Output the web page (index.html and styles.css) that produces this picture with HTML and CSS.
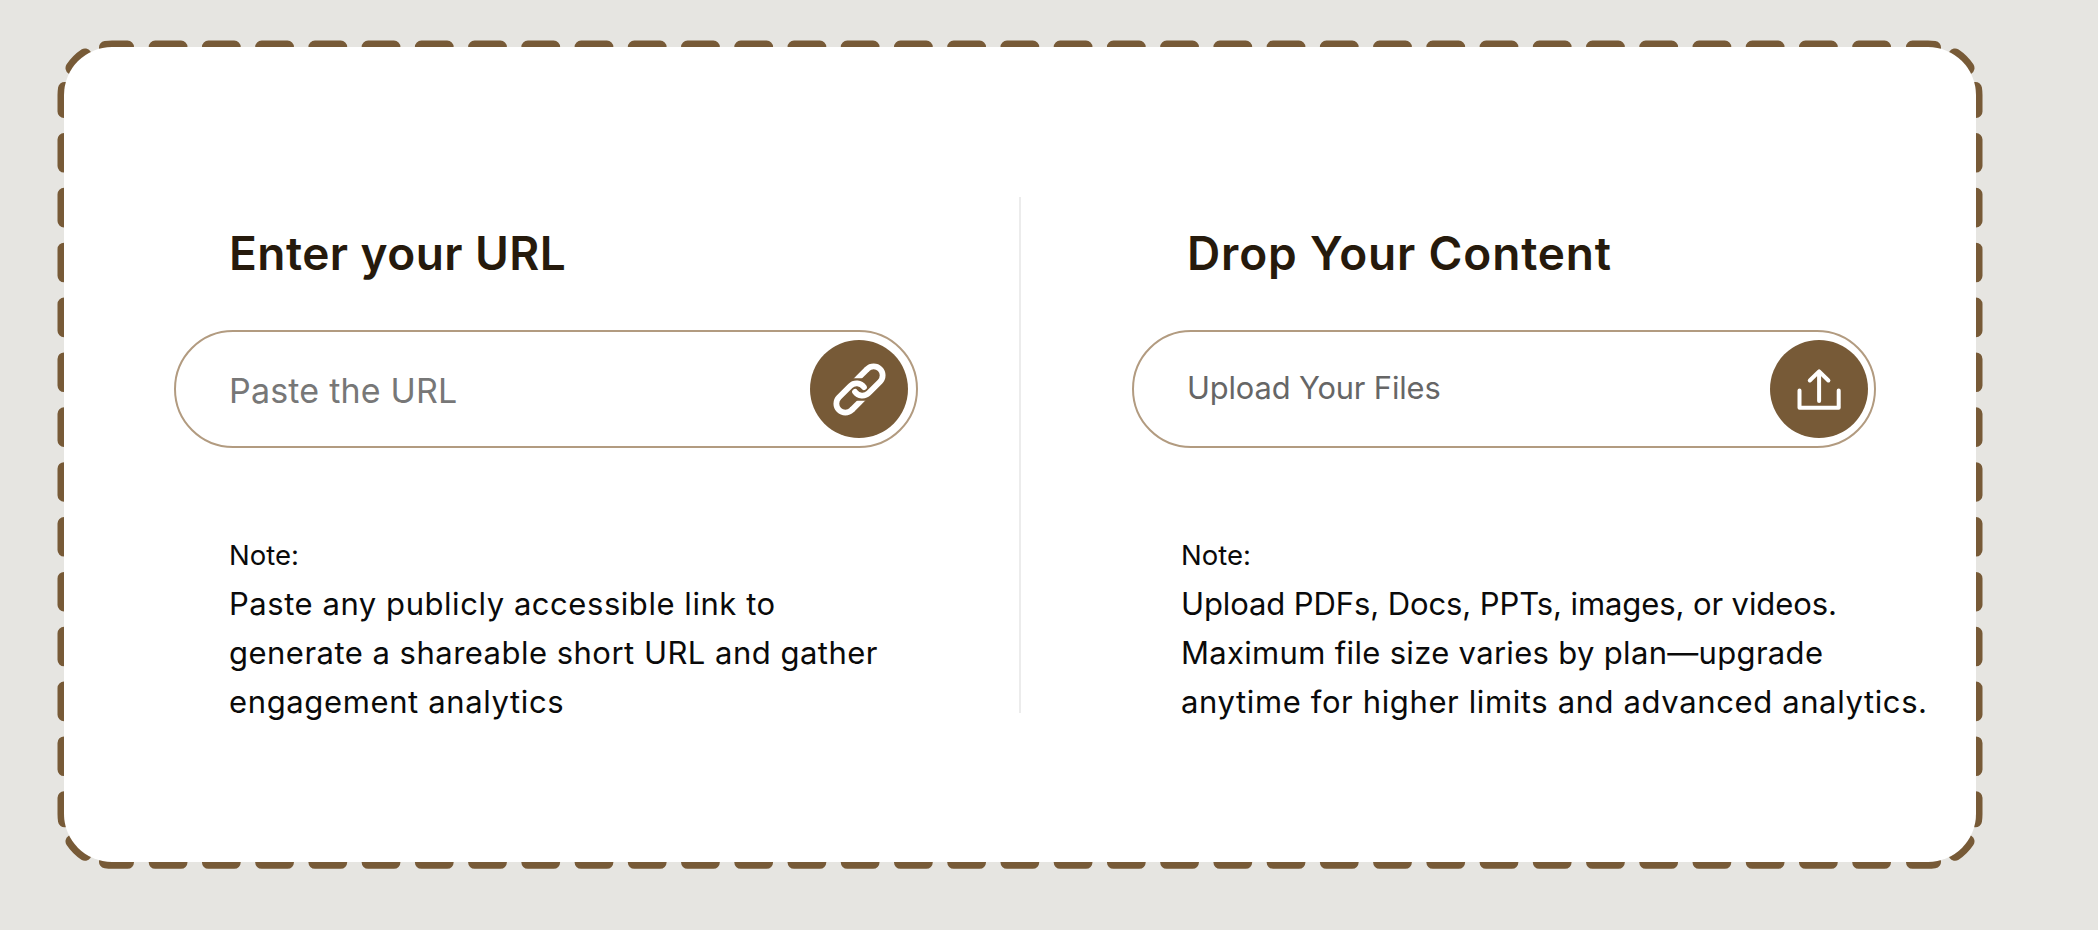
FILE: index.html
```
<!DOCTYPE html>
<html lang="en">
<head>
<meta charset="utf-8">
<title>Share content</title>
<link rel="stylesheet" href="styles.css">
</head>
<body>
<main class="card">
  <svg class="dashes" viewBox="54 37 1932 835" aria-hidden="true">
    <g id="h">
      <path class="dash-h" d="M155.2 47H1884.6"/>
      <path d="M105.5 47.5Q109 47 112 47H127.5M1934.5 47.5Q1931 47 1928 47H1912.5"/>
    </g>
    <use href="#h" transform="matrix(1 0 0 -1 0 909.3)"/>
    <g id="v">
      <path class="dash-v" d="M64 139.5V769.7"/>
      <path d="M64.5 88.5Q64 92 64 95V111.5M64.5 820.8Q64 817 64 814V797.8"/>
      <path d="M72 68A48 48 0 0 1 85 55M72 841.3A48 48 0 0 0 85 854.3"/>
    </g>
    <use href="#v" transform="matrix(-1 0 0 1 2040 0)"/>
  </svg>
  <section class="panel">
    <h2 class="title title-url">Enter your URL</h2>
    <div class="field">
      <span class="hint hint-url">Paste the URL</span>
      <button class="action" aria-label="Shorten link">
        <svg viewBox="0 0 98.5 98.5">
          <defs><clipPath id="cut"><path d="M-20 -30H30V-11.3H-20Z"/></clipPath></defs>
          <g transform="translate(49.5 49.5)" fill="none" stroke="#fff" stroke-width="5.8">
            <g id="half">
              <g clip-path="url(#cut)"><path transform="rotate(-45)" d="M0 -9H20.2"/></g>
              <path transform="rotate(-45)" stroke-linecap="round" d="M20 -9A9 9 0 0 1 20 9H4A9 9 0 0 1 -4.8 -1.5"/>
            </g>
            <use href="#half" transform="rotate(180)"/>
          </g>
        </svg>
      </button>
    </div>
    <div class="note">
      <p class="label">Note:</p>
      <p class="line l1">Paste any publicly accessible link to</p>
      <p class="line l2">generate a shareable short URL and gather</p>
      <p class="line l3">engagement analytics</p>
    </div>
  </section>
  <div class="divider"></div>
  <section class="panel panel-files">
    <h2 class="title title-drop">Drop Your Content</h2>
    <div class="field field-files">
      <span class="hint hint-files">Upload Your Files</span>
      <button class="action" aria-label="Upload files">
        <svg viewBox="0 0 98.5 98.5"><path d="M29.5 50.5V67.7H68.7V50.5M49.1 61V31.5M39.8 40.5L49.1 31.3L58.4 40.5" fill="none" stroke="#fff" stroke-width="4" stroke-linecap="round" stroke-linejoin="round"/></svg>
      </button>
    </div>
    <div class="note">
      <p class="label">Note:</p>
      <p class="line r1">Upload PDFs, Docs, PPTs, images, or videos.</p>
      <p class="line r2">Maximum file size varies by plan—upgrade</p>
      <p class="line r3">anytime for higher limits and advanced analytics.</p>
    </div>
  </section>
</main>
</body>
</html>
```
FILE: styles.css
```
* { box-sizing: border-box; margin: 0; }
body {
  padding: 47px 0 0 64px;
  height: 930px;
  overflow: hidden;
  background: #e6e5e1;
  font-family: Inter, "Open Sans", sans-serif;
}
.card {
  position: relative;
  display: grid;
  grid-template-columns: 845px 2px 847px;
  width: 1912px;
  height: 815.3px;
  padding: 150px 0 0 110px;
}
.card::before {
  content: "";
  position: absolute;
  inset: 0;
  border-radius: 48px;
  background: #fff;
}
.dashes {
  position: absolute;
  z-index: -1;
  left: -10px;
  top: -10px;
  width: 1932px;
  height: 835px;
  fill: none;
  stroke: #775a37;
  stroke-width: 13;
  stroke-linecap: round;
}
.dash-h { stroke-dasharray: 25.8 27.435; }
.dash-v { stroke-dasharray: 26.6 28.26; }
.panel { position: relative; white-space: nowrap; }
.panel-files { padding-left: 111px; }
.divider { position: relative; height: 516px; background: #ececec; }
.title {
  padding: 28px 0 0 55px;
  font-size: 46px;
  line-height: 56px;
  font-weight: 600;
  color: #261a0c;
}
.title-url { letter-spacing: 0.45px; }
.title-drop { letter-spacing: 0.85px; }
.field {
  display: flex;
  align-items: center;
  justify-content: space-between;
  width: 744px;
  height: 118px;
  margin-top: 49px;
  padding: 0 8px 0 53px;
  border: 2px solid #b29b80;
  border-radius: 59px;
}
.field-files { padding-right: 6px; }
.hint { font-size: 34px; color: #777; }
.hint-url { padding-top: 2px; letter-spacing: 0.2px; }
.hint-files { padding-bottom: 3px; font-size: 30.8px; color: #666; letter-spacing: -0.12px; }
.action {
  width: 98.5px;
  height: 98.5px;
  padding: 0;
  border: 0;
  border-radius: 50%;
  background: #775a37;
}
.action svg { display: block; }
.note { padding: 84px 0 0 55px; color: #0a0a0a; }
.panel-files .note { padding-left: 49px; }
.label { font-size: 27.5px; line-height: 47px; }
.line { font-size: 31px; line-height: 49.2px; }
.l1 { letter-spacing: 0.55px; }
.l2 { letter-spacing: 0.48px; }
.l3 { letter-spacing: 0.63px; }
.r1 { letter-spacing: -0.1px; }
.r2 { letter-spacing: 0.32px; }
.r3 { letter-spacing: 0.62px; }
```
